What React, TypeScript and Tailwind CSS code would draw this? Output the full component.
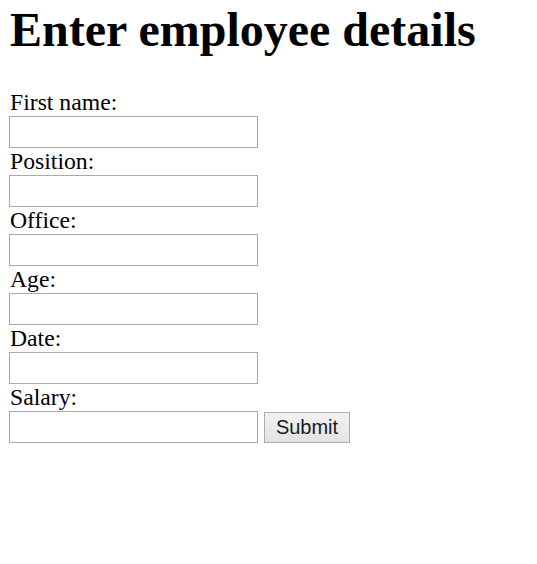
const FIELDS = ['First name:', 'Position:', 'Office:', 'Age:', 'Date:', 'Salary:'];

export default function App() {
  return (
    <div className="min-h-screen bg-white px-[10px] pt-[2px] text-black font-['Liberation_Serif','Times_New_Roman',serif]">
      <h1 className="text-[48px] font-bold leading-[55px] mb-[32px]">Enter employee details</h1>

      <form onSubmit={(e) => e.preventDefault()}>
        {FIELDS.map((label, i) => (
          <div key={label}>
            <div className="text-[23.7px] leading-[27px]">{label}</div>
            <div className="flex items-center">
              <input
                type="text"
                className="-ml-px w-[249px] h-[32px] border border-[#a9a9a9] bg-white px-1 text-[20px] outline-none"
              />
              {i === FIELDS.length - 1 && (
                <button
                  type="submit"
                  className="ml-[6px] h-[31px] w-[86px] border border-[#adadad] bg-gradient-to-b from-[#f2f2f2] to-[#e3e3e3] text-[20px] leading-none text-[#1a1a1a] font-['Liberation_Sans',Arial,sans-serif]"
                >
                  Submit
                </button>
              )}
            </div>
          </div>
        ))}
      </form>
    </div>
  );
}
